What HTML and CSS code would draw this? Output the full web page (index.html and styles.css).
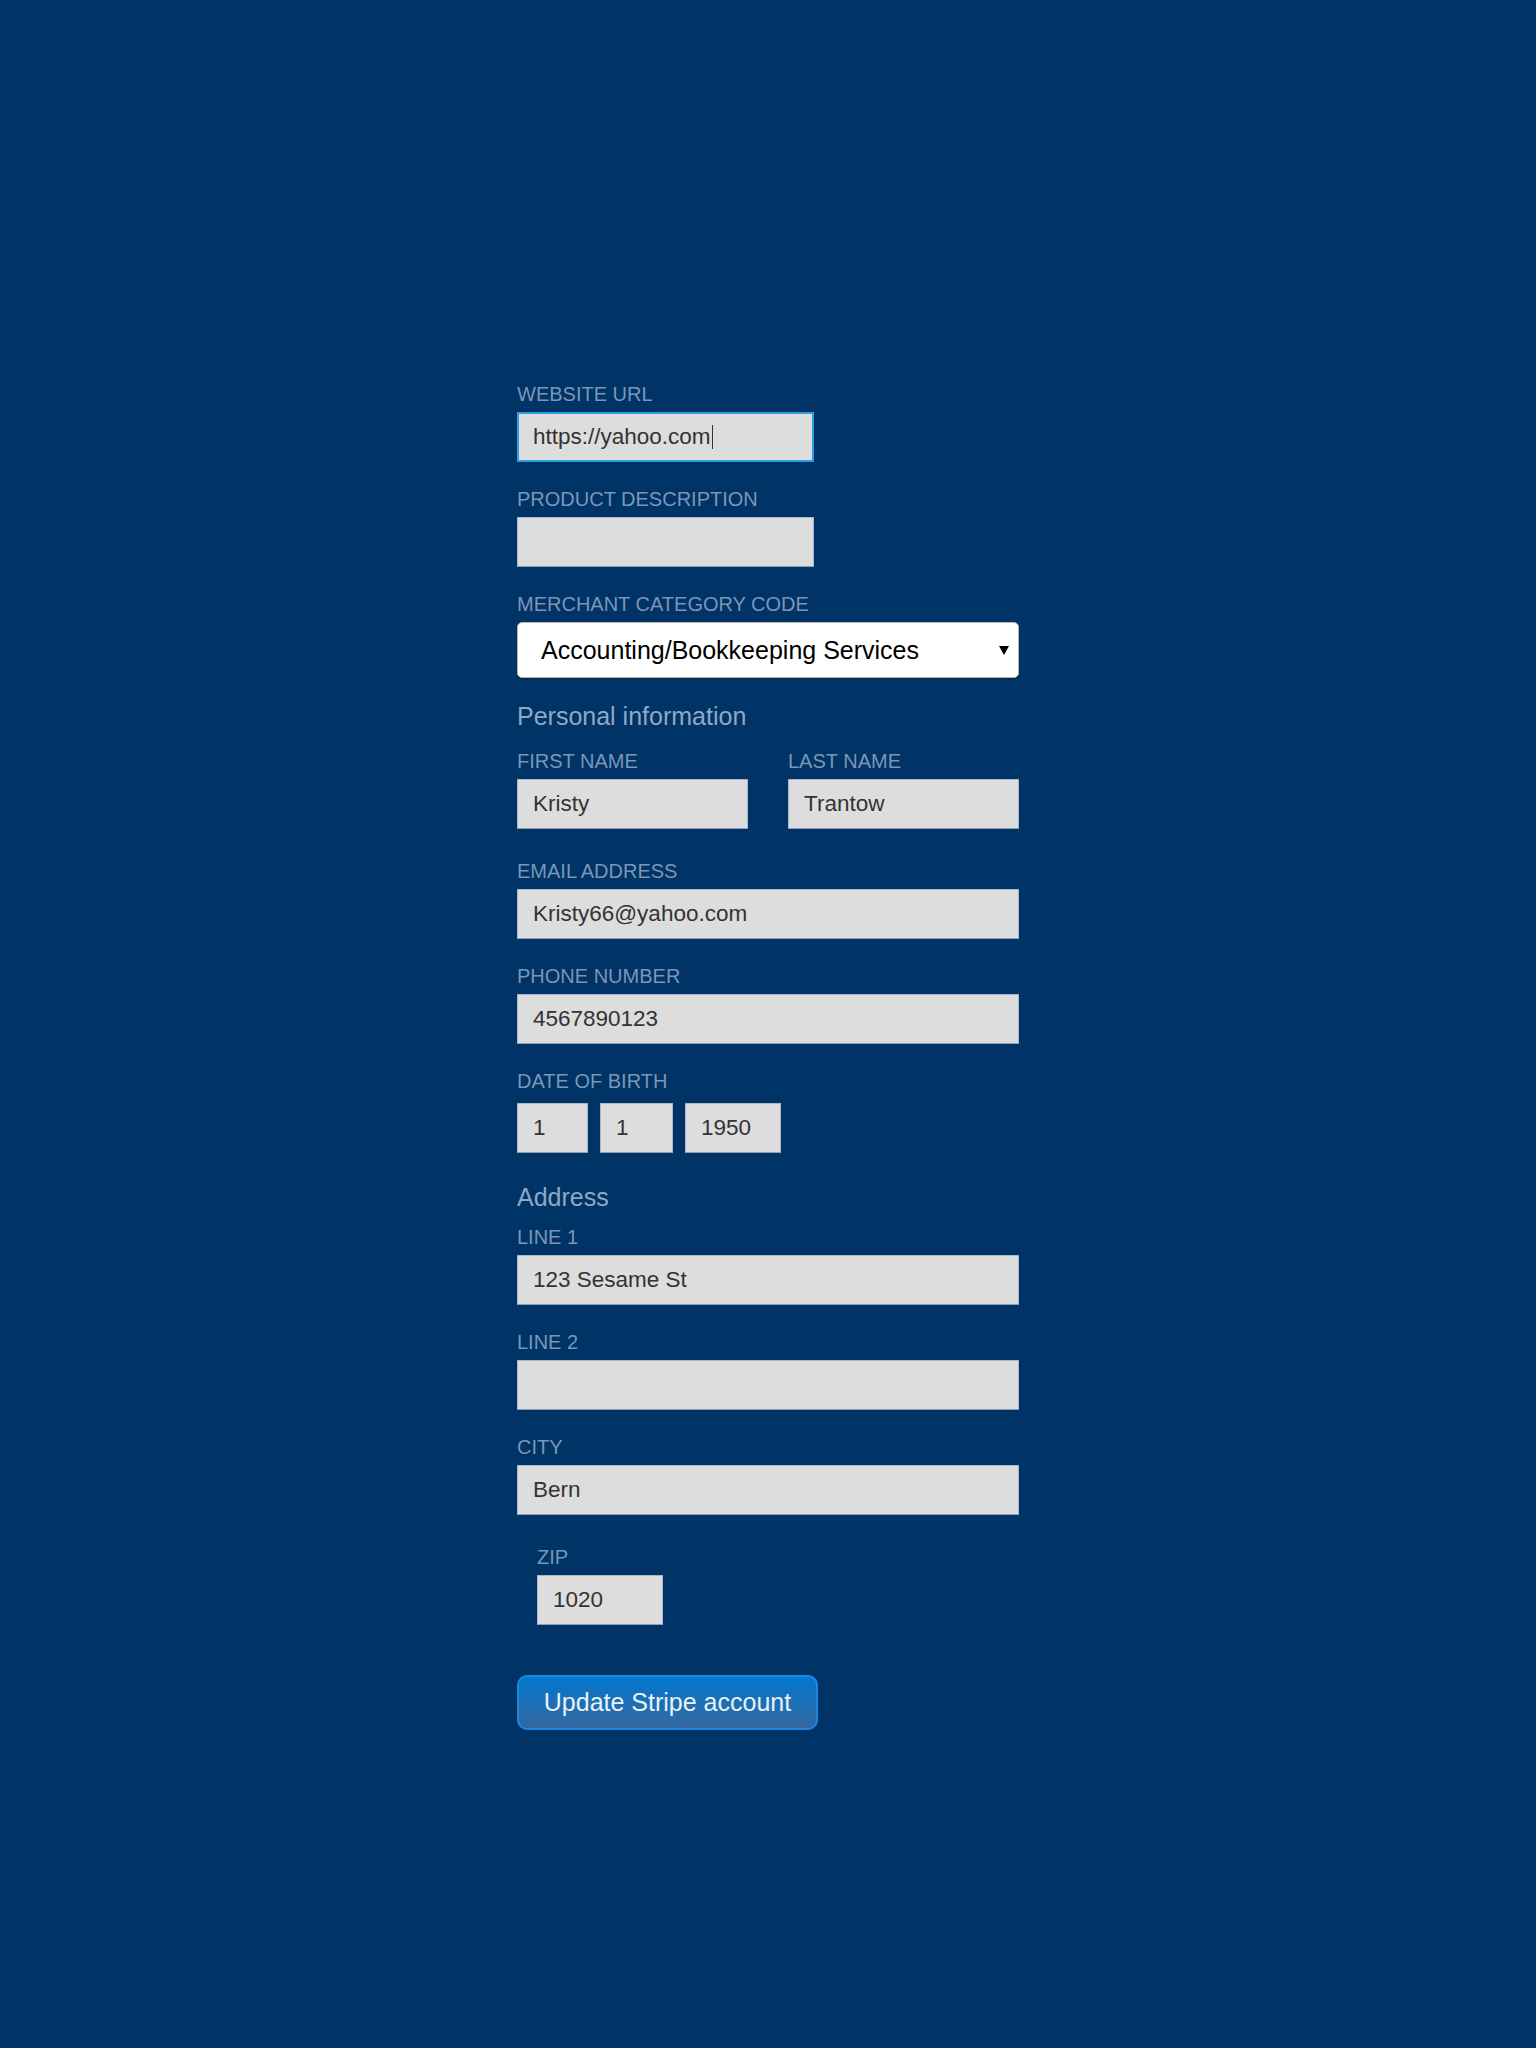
FILE: index.html
```html
<!DOCTYPE html>
<html lang="en">
<head>
<meta charset="utf-8">
<title>Update Stripe account</title>
<link rel="stylesheet" href="styles.css">
</head>
<body>
<form class="form">
  <div class="group">
    <label class="label">Website URL</label>
    <div class="input input-focus input-short">https://yahoo.com<span class="caret"></span></div>
  </div>
  <div class="group">
    <label class="label">Product description</label>
    <input class="input input-short" type="text" value="">
  </div>
  <div class="group group-select">
    <label class="label">Merchant category code</label>
    <div class="select-wrap">
      <div class="select">Accounting/Bookkeeping Services</div>
      <svg class="select-arrow" width="10" height="10" viewBox="0 0 10 10"><polygon points="0,1 10,1 5,10" fill="#000"/></svg>
    </div>
  </div>

  <h2 class="heading heading-personal">Personal information</h2>
  <div class="row group group-names">
    <div class="col">
      <label class="label">First name</label>
      <input class="input" type="text" value="Kristy">
    </div>
    <div class="col">
      <label class="label">Last name</label>
      <input class="input" type="text" value="Trantow">
    </div>
  </div>
  <div class="group">
    <label class="label">Email address</label>
    <input class="input" type="text" value="Kristy66@yahoo.com">
  </div>
  <div class="group">
    <label class="label">Phone number</label>
    <input class="input" type="text" value="4567890123">
  </div>
  <div class="group group-dob">
    <label class="label label-dob">Date of birth</label>
    <div class="dob">
      <input class="input dob-day" type="text" value="1">
      <input class="input dob-month" type="text" value="1">
      <input class="input dob-year" type="text" value="1950">
    </div>
  </div>

  <h2 class="heading heading-address">Address</h2>
  <div class="group">
    <label class="label">Line 1</label>
    <input class="input" type="text" value="123 Sesame St">
  </div>
  <div class="group">
    <label class="label">Line 2</label>
    <input class="input" type="text" value="">
  </div>
  <div class="group group-city">
    <label class="label">City</label>
    <input class="input" type="text" value="Bern">
  </div>
  <div class="group group-zip">
    <label class="label">Zip</label>
    <input class="input input-zip" type="text" value="1020">
  </div>

  <button class="button" type="button">Update Stripe account</button>
</form>
</body>
</html>
```

FILE: styles.css
```css
html, body {
  margin: 0;
  padding: 0;
  background: #003366;
  min-height: 2048px;
}

body {
  font-family: "Liberation Sans", Arial, sans-serif;
}

.form {
  width: 502px;
  margin: 0 0 0 517px;
  padding-top: 383px;
}

.group {
  margin-bottom: 26px;
}

.group-select {
  margin-bottom: 24px;
}

.group-names {
  margin-bottom: 31px;
}

.group-dob {
  margin-bottom: 30px;
}

.group-city {
  margin-bottom: 31px;
}

.group-zip {
  margin-left: 20px;
  margin-bottom: 50px;
}

.label {
  display: block;
  font-size: 20px;
  line-height: 22px;
  height: 22px;
  color: #7b96b6;
  text-transform: uppercase;
  margin-bottom: 7px;
}

.label-dob {
  margin-bottom: 11px;
}

.input {
  display: block;
  box-sizing: border-box;
  width: 100%;
  height: 50px;
  margin: 0;
  padding: 0 15px;
  border: 1px solid #a9b6c6;
  border-bottom-color: #8f9db0;
  border-radius: 0;
  background: #dddddd;
  color: #333333;
  font-family: "Liberation Sans", Arial, sans-serif;
  font-size: 22.5px;
  line-height: 48px;
  outline: none;
}

.input-short {
  width: 297px;
}

.input-focus {
  border: 2px solid #2c9de0;
  padding: 0 14px;
  line-height: 46px;
  white-space: nowrap;
}

.caret {
  display: inline-block;
  width: 1px;
  height: 24px;
  background: #333333;
  vertical-align: -5px;
  margin-left: 1px;
}

.select-wrap {
  position: relative;
  width: 502px;
}

.select {
  box-sizing: border-box;
  height: 56px;
  padding: 0 23px;
  background: #ffffff;
  border: 1px solid #b7b7b7;
  border-radius: 5px;
  box-shadow: 0 1px 1px rgba(0, 0, 0, 0.35);
  font-size: 25px;
  line-height: 54px;
  color: #000000;
}

.select-arrow {
  position: absolute;
  right: 10px;
  top: 23px;
  width: 10px;
  height: 10px;
}

.heading {
  margin: 0;
  font-size: 25px;
  line-height: 28px;
  font-weight: normal;
  color: #8fa8c6;
}

.heading-personal {
  margin-bottom: 20px;
}

.heading-address {
  margin-bottom: 15px;
}

.row {
  display: flex;
  gap: 40px;
}

.col {
  width: 231px;
}

.dob {
  display: flex;
  gap: 12px;
}

.dob-day {
  width: 71px;
}

.dob-month {
  width: 73px;
}

.dob-year {
  width: 96px;
}

.input-zip {
  width: 126px;
}

.button {
  display: block;
  box-sizing: border-box;
  height: 55px;
  width: 301px;
  padding: 0;
  border: 2px solid #1c87e2;
  border-radius: 10px;
  background: linear-gradient(#0477cf, #33679e);
  color: #e9f1f8;
  font-family: "Liberation Sans", Arial, sans-serif;
  font-size: 25px;
  text-align: center;
}
```
